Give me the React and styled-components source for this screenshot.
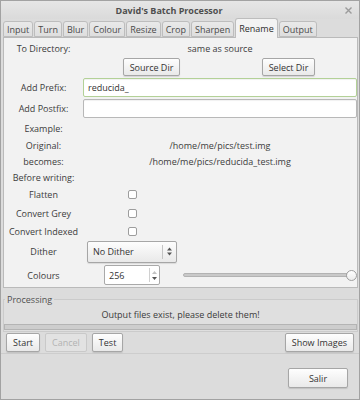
import React from 'react';
import styled, { createGlobalStyle } from 'styled-components';

const GlobalStyle = createGlobalStyle`
  html, body { margin: 0; padding: 0; background: #dcdcdc; }
  body {
    font-family: "Open Sans", "Noto Sans", sans-serif;
    font-size: 9px;
    color: #3c3c3c;
  }
  * { box-sizing: border-box; }
`;

const Window = styled.div`
  width: 360px;
  height: 400px;
  display: flex;
  flex-direction: column;
  border: 1px solid #a2a2a2;
  background: #dcdcdc;
  overflow: hidden;
`;

const TitleBar = styled.div`
  height: 18px;
  display: flex;
  align-items: center;
  background: linear-gradient(#e6e6e6, #dadada);
`;

const Title = styled.div`
  flex: 1;
  text-align: center;
  font-weight: bold;
  color: #4e4e4e;
`;

const Close = styled.div`
  width: 22px;
  display: flex;
  justify-content: center;
`;

const TabBar = styled.div`
  height: 18px;
  display: flex;
  align-items: flex-end;
  gap: 1px;
  padding-left: 2px;
`;

const Tab = styled.div`
  position: relative;
  z-index: ${(p) => (p.$active ? 1 : 0)};
  height: ${(p) => (p.$active ? 20 : 16)}px;
  margin-bottom: ${(p) => (p.$active ? -1 : 0)}px;
  padding: 0 3px;
  display: flex;
  align-items: center;
  border: 1px solid #bdbdbd;
  border-bottom: ${(p) => (p.$active ? 'none' : '1px solid #bdbdbd')};
  border-radius: 3px 3px 0 0;
  background: ${(p) => (p.$active ? '#f3f3f3' : 'linear-gradient(#e9e9e9, #dedede)')};
  color: ${(p) => (p.$active ? '#2e2e2e' : '#4a4a4a')};
`;

const Panel = styled.div`
  margin: 0 1px 0 2px;
  border: 1px solid #bababa;
  background: #f2f2f2;
  display: flex;
  flex-direction: column;
`;

const Row = styled.div`
  height: ${(p) => p.$h}px;
  display: grid;
  grid-template-columns: ${(p) => (p.$three ? '79px 98px 1fr' : '79px 1fr')};
  align-items: center;
`;

const Label = styled.div`
  text-align: center;
  white-space: nowrap;
`;

const Value = styled.div`
  text-align: center;
  white-space: nowrap;
`;

const Halves = styled.div`
  display: grid;
  grid-template-columns: 1fr 1fr;
  justify-items: center;
  align-self: start;
`;

const Button = styled.button`
  height: ${(p) => p.$h || 19}px;
  width: ${(p) => (p.$w ? `${p.$w}px` : 'auto')};
  padding: 0 6px;
  font-family: inherit;
  font-size: 9px;
  color: ${(p) => (p.disabled ? '#b2b2b2' : '#333')};
  border: 1px solid ${(p) => (p.disabled ? '#c9c9c9' : '#a6a6a6')};
  border-radius: 2px;
  background: ${(p) => (p.disabled ? '#e2e2e2' : 'linear-gradient(#fefefe, #e9e9e9)')};
  box-shadow: ${(p) => (p.disabled ? 'none' : '0 1px 1px rgba(0,0,0,0.12)')};
`;

const TextField = styled.div`
  height: 19px;
  display: flex;
  align-items: center;
  padding-left: 4px;
  background: #fff;
  border: 1px solid ${(p) => (p.$focus ? '#b3d197' : '#b8b8b8')};
  border-radius: 2px;
  box-shadow: inset 0 1px 1px rgba(0,0,0,0.06);
  color: #333;
`;

const Center = styled.div`
  display: flex;
  justify-content: center;
`;

const Check = styled.div`
  width: 9px;
  height: 9px;
  border: 1px solid #9d9d9d;
  border-radius: 2px;
  background: #fff;
`;

const Select = styled.div`
  margin-left: 4px;
  width: 90px;
  height: 22px;
  display: flex;
  border: 1px solid #a6a6a6;
  border-radius: 2px;
  background: linear-gradient(#fdfdfd, #e9e9e9);
  box-shadow: 0 1px 1px rgba(0,0,0,0.1);
`;

const SelectText = styled.div`
  flex: 1;
  display: flex;
  align-items: center;
  padding-left: 5px;
  color: #333;
  border-right: 1px solid #c4c4c4;
  margin: 3px 0;
`;

const Arrows = styled.div`
  width: 13px;
  display: flex;
  align-items: center;
  justify-content: center;
`;

const Spin = styled.div`
  width: 56px;
  height: 20px;
  display: flex;
  border: 1px solid #a9a9a9;
  border-radius: 2px;
  background: #fff;
`;

const SpinText = styled.div`
  flex: 1;
  display: flex;
  align-items: center;
  padding-left: 4px;
  color: #333;
`;

const SpinArrows = styled.div`
  width: 10px;
  display: flex;
  flex-direction: column;
  justify-content: center;
  align-items: center;
  gap: 3px;
  border-left: 1px solid #d0d0d0;
  margin: 2px 0;
`;

const Slider = styled.div`
  display: flex;
  align-items: center;
  padding-left: 2px;
`;

const Track = styled.div`
  flex: 1;
  height: 4px;
  border: 1px solid #b3b3b3;
  border-radius: 2px;
  background: #c9c9c9;
`;

const Knob = styled.div`
  width: 11px;
  height: 11px;
  margin-left: -6px;
  border: 1px solid #9f9f9f;
  border-radius: 50%;
  background: linear-gradient(#ffffff, #ececec);
`;

const Group = styled.fieldset`
  margin: 3px 1px 0 2px;
  padding: 0 0 1px;
  border: 1px solid #cbcbcb;
  background: #dfdfdf;
  min-width: 0;
`;

const Legend = styled.legend`
  padding: 0 2px;
  margin-left: 1px;
  line-height: 17px;
  color: #505050;
`;

const Message = styled.div`
  height: 14px;
  line-height: 14px;
  text-align: center;
  color: #3a3a3a;
`;

const Progress = styled.div`
  height: 6px;
  margin: 2px 0 0;
  border: 1px solid #b4b4b4;
  background: #cdcdcd;
`;

const ButtonRow = styled.div`
  display: flex;
  gap: 5px;
  margin-top: 1px;
  padding: 0 5px 1px;
  border-bottom: 1px solid #cdcdcd;
`;

const Spacer = styled.div`
  flex: 1;
`;

const Footer = styled.div`
  display: flex;
  justify-content: flex-end;
  padding: 14px 11px 0 0;
`;

const tabs = ['Input', 'Turn', 'Blur', 'Colour', 'Resize', 'Crop', 'Sharpen', 'Rename', 'Output'];

const UpDown = ({ upColor = '#555', downColor = '#555' }) => (
  <svg width="5" height="9" viewBox="0 0 5 9">
    <path d="M0 3.5 L2.5 0.5 L5 3.5 Z" fill={upColor} />
    <path d="M0 5.5 L2.5 8.5 L5 5.5 Z" fill={downColor} />
  </svg>
);

const Tri = ({ up, color }) => (
  <svg width="5" height="3" viewBox="0 0 5 3">
    <path d={up ? 'M0 3 L2.5 0 L5 3 Z' : 'M0 0 L2.5 3 L5 0 Z'} fill={color} />
  </svg>
);

const App = () => (
  <>
    <GlobalStyle />
    <Window>
      <TitleBar>
        <Title>David's Batch Processor</Title>
        <Close>
          <svg width="7" height="7" viewBox="0 0 7 7">
            <path d="M0.5 0.5 L6.5 6.5 M6.5 0.5 L0.5 6.5" stroke="#9b9b9b" strokeWidth="1.4" />
          </svg>
        </Close>
      </TitleBar>
      <TabBar>
        {tabs.map((t) => (
          <Tab key={t} $active={t === 'Rename'}>{t}</Tab>
        ))}
      </TabBar>
      <Panel>
        <Row $h={20}>
          <Label>To Directory:</Label>
          <Value>same as source</Value>
        </Row>
        <Row $h={19}>
          <div />
          <Halves>
            <Button $h={18}>Source Dir</Button>
            <Button $h={18}>Select Dir</Button>
          </Halves>
        </Row>
        <Row $h={21}>
          <Label>Add Prefix:</Label>
          <TextField $focus>reducida_</TextField>
        </Row>
        <Row $h={21}>
          <Label>Add Postfix:</Label>
          <TextField />
        </Row>
        <Row $h={18}>
          <Label>Example:</Label>
        </Row>
        <Row $h={16}>
          <Label>Original:</Label>
          <Value>/home/me/pics/test.img</Value>
        </Row>
        <Row $h={16}>
          <Label>becomes:</Label>
          <Value>/home/me/pics/reducida_test.img</Value>
        </Row>
        <Row $h={16}>
          <Label>Before writing:</Label>
        </Row>
        <Row $h={19} $three>
          <Label>Flatten</Label>
          <Center><Check /></Center>
        </Row>
        <Row $h={18} $three>
          <Label>Convert Grey</Label>
          <Center><Check /></Center>
        </Row>
        <Row $h={18} $three>
          <Label>Convert Indexed</Label>
          <Center><Check /></Center>
        </Row>
        <Row $h={23} $three>
          <Label>Dither</Label>
          <Select>
            <SelectText>No Dither</SelectText>
            <Arrows><UpDown /></Arrows>
          </Select>
        </Row>
        <Row $h={24} $three>
          <Label>Colours</Label>
          <Center>
            <Spin>
              <SpinText>256</SpinText>
              <SpinArrows>
                <Tri up color="#c2c2c2" />
                <Tri color="#555" />
              </SpinArrows>
            </Spin>
          </Center>
          <Slider>
            <Track />
            <Knob />
          </Slider>
        </Row>
      </Panel>
      <Group>
        <Legend>Processing</Legend>
        <Message>Output files exist, please delete them!</Message>
        <Progress />
      </Group>
      <ButtonRow>
        <Button>Start</Button>
        <Button disabled>Cancel</Button>
        <Button>Test</Button>
        <Spacer />
        <Button>Show Images</Button>
      </ButtonRow>
      <Footer>
        <Button $w={60} $h={20}>Salir</Button>
      </Footer>
    </Window>
  </>
);

export default App;
